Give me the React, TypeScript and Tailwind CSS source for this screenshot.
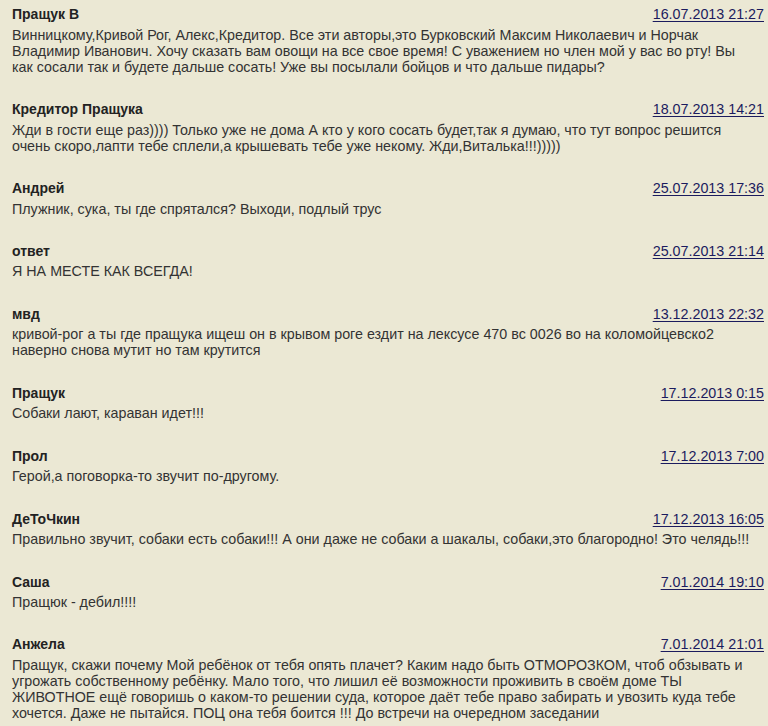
import React from "react";

type Item = { name: string; date: string; lines: React.ReactNode[] };

const items: Item[] = [
  {
    name: "Пращук В",
    date: "16.07.2013 21:27",
    lines: [
      "Винницкому,Кривой Рог, Алекс,Кредитор. Все эти авторы,это Бурковский Максим Николаевич и Норчак",
      "Владимир Иванович. Хочу сказать вам овощи на все свое время! С уважением но член мой у вас во рту! Вы",
      "как сосали так и будете дальше сосать! Уже вы посылали бойцов и что дальше пидары?",
    ],
  },
  {
    name: "Кредитор Пращука",
    date: "18.07.2013 14:21",
    lines: [
      "Жди в гости еще раз)))) Только уже не дома А кто у кого сосать будет,так я думаю, что тут вопрос решится",
      "очень скоро,лапти тебе сплели,а крышевать тебе уже некому. Жди,Виталька!!!)))))",
    ],
  },
  {
    name: "Андрей",
    date: "25.07.2013 17:36",
    lines: ["Плужник, сука, ты где спрятался? Выходи, подлый трус"],
  },
  {
    name: "ответ",
    date: "25.07.2013 21:14",
    lines: ["Я НА МЕСТЕ КАК ВСЕГДА!"],
  },
  {
    name: "мвд",
    date: "13.12.2013 22:32",
    lines: [
      "кривой-рог а ты где пращука ищеш он в крывом роге ездит на лексусе 470 вс 0026 во на коломойцевско2",
      "наверно снова мутит но там крутится",
    ],
  },
  {
    name: "Пращук",
    date: "17.12.2013 0:15",
    lines: ["Собаки лают, караван идет!!!"],
  },
  {
    name: "Прол",
    date: "17.12.2013 7:00",
    lines: ["Герой,а поговорка-то звучит по-другому."],
  },
  {
    name: "ДеТоЧкин",
    date: "17.12.2013 16:05",
    lines: [
      "Правильно звучит, собаки есть собаки!!! А они даже не собаки а шакалы, собаки,это благородно! Это челядь!!!",
    ],
  },
  {
    name: "Саша",
    date: "7.01.2014 19:10",
    lines: ["Пращюк - дебил!!!!"],
  },
  {
    name: "Анжела",
    date: "7.01.2014 21:01",
    lines: [
      "Пращук, скажи почему Мой ребёнок от тебя опять плачет? Каким надо быть ОТМОРОЗКОМ, чтоб обзывать и",
      "угрожать собственному ребёнку. Мало того, что лишил её возможности проживить в своём доме ТЫ",
      "ЖИВОТНОЕ ещё говоришь о каком-то решении суда, которое даёт тебе право забирать и увозить куда тебе",
      "хочется. Даже не пытайся. ПОЦ она тебя боится !!! До встречи на очередном заседании",
    ],
  },
];

export default function App() {
  return (
    <div
      className="min-h-[726px] w-full bg-[#ebe8d4] pt-[6px] pl-[12px] pr-[4px] text-[#333333]"
      style={{ fontFamily: '"Liberation Sans", Arial, sans-serif' }}
    >
      {items.map((it, i) => (
        <div key={i} className="mb-[26.3px]">
          <div className="mb-[4.5px] flex h-[16px] items-baseline justify-between leading-[16px]">
            <span className="text-[14px] font-bold text-[#222222]">{it.name}</span>
            <a
              href="#"
              className="text-[14.3px] text-[#1b1b5e] underline underline-offset-[2px]"
            >
              {it.date}
            </a>
          </div>
          <div className="text-[14.3px] leading-[16.1px]">
            {it.lines.map((l, j) => (
              <div key={j} className="whitespace-nowrap">
                {l}
              </div>
            ))}
          </div>
        </div>
      ))}
    </div>
  );
}
